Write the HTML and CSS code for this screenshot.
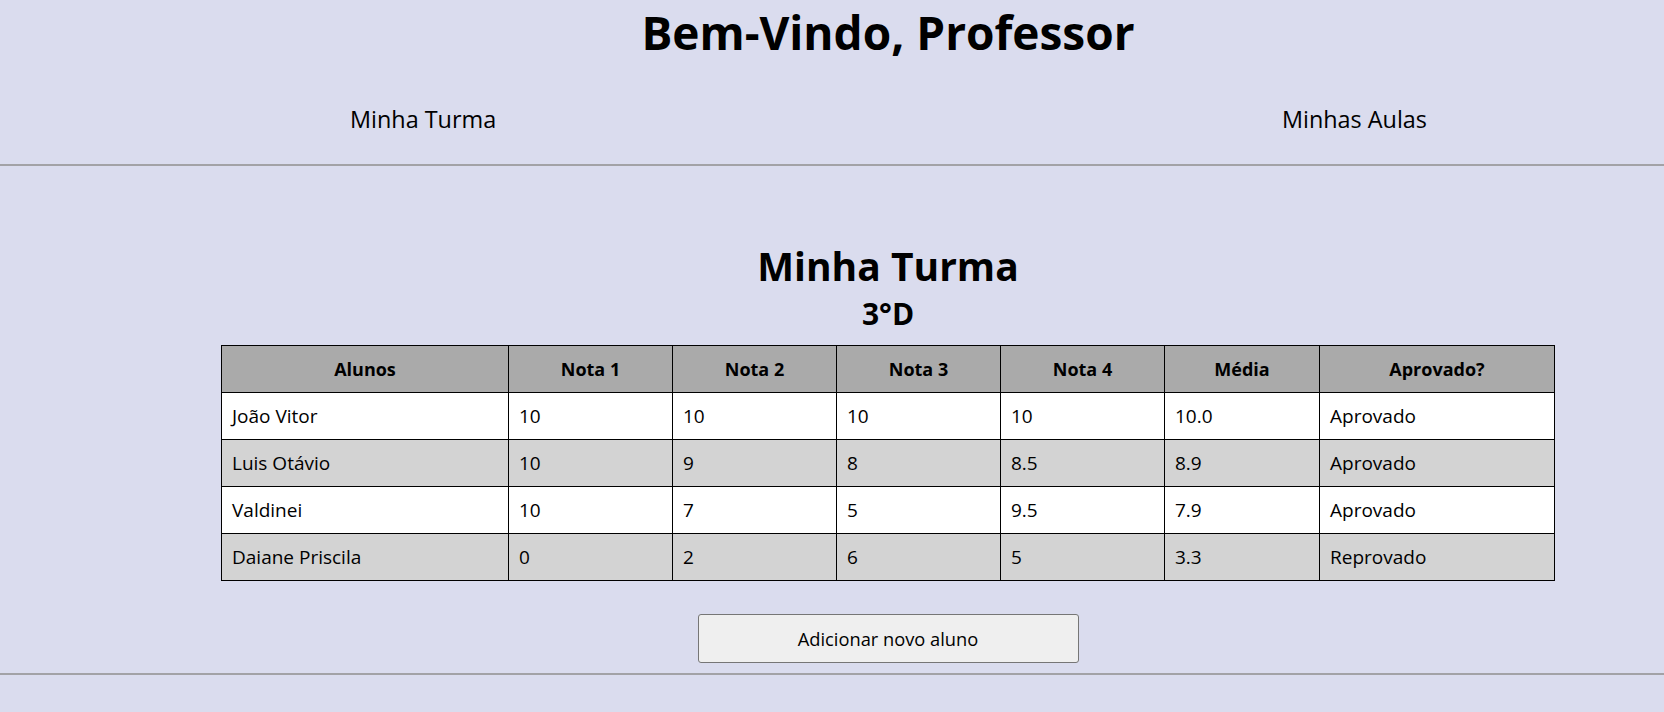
FILE: index.html
```html
<!DOCTYPE html>
<html lang="pt-BR">
<head>
<meta charset="utf-8">
<title>Professor</title>
<link rel="stylesheet" href="styles.css">
</head>
<body>
<header class="top">
  <h1 class="title">Bem-Vindo, Professor</h1>
  <nav class="nav">
    <a class="nav-link" href="#">Minha Turma</a>
    <a class="nav-link" href="#">Minhas Aulas</a>
  </nav>
</header>
<div class="rule rule-top"></div>
<main class="content">
  <h2 class="section-title">Minha Turma</h2>
  <h3 class="section-sub">3°D</h3>
  <table class="grades">
    <colgroup>
      <col class="c-name"><col class="c-n"><col class="c-n"><col class="c-n"><col class="c-n"><col class="c-avg"><col class="c-ok">
    </colgroup>
    <thead>
      <tr><th>Alunos</th><th>Nota 1</th><th>Nota 2</th><th>Nota 3</th><th>Nota 4</th><th>Média</th><th>Aprovado?</th></tr>
    </thead>
    <tbody>
      <tr><td>João Vitor</td><td>10</td><td>10</td><td>10</td><td>10</td><td>10.0</td><td>Aprovado</td></tr>
      <tr><td>Luis Otávio</td><td>10</td><td>9</td><td>8</td><td>8.5</td><td>8.9</td><td>Aprovado</td></tr>
      <tr><td>Valdinei</td><td>10</td><td>7</td><td>5</td><td>9.5</td><td>7.9</td><td>Aprovado</td></tr>
      <tr><td>Daiane Priscila</td><td>0</td><td>2</td><td>6</td><td>5</td><td>3.3</td><td>Reprovado</td></tr>
    </tbody>
  </table>
  <button class="add-btn" type="button">Adicionar novo aluno</button>
</main>
<div class="rule rule-bottom"></div>
</body>
</html>
```

FILE: styles.css
```css
* { box-sizing: border-box; }

html, body {
  margin: 0;
  padding: 0;
  background: #dadcee;
  color: #000;
  font-family: "Open Sans", "Noto Sans", sans-serif;
  overflow: hidden;
}

.top {
  padding-left: 112px;
}

.title {
  margin: 0;
  font-size: 46px;
  line-height: 64px;
  font-weight: 700;
  text-align: center;
}

.nav {
  display: flex;
  justify-content: space-between;
  margin: 35px 0 0 -112px;
  padding: 0 237px 0 350px;
}

.nav-link {
  font-size: 23.4px;
  line-height: 40px;
  color: #000;
  text-decoration: none;
}

.rule {
  height: 2px;
  background: #a2a2a6;
}

.rule-top { margin-top: 25px; }

.content {
  display: flex;
  flex-direction: column;
  align-items: center;
  padding: 71px 0 0 112px;
}

.section-title {
  margin: 0;
  font-size: 39px;
  line-height: 58px;
  font-weight: 700;
}

.section-sub {
  margin: 0;
  font-size: 30px;
  line-height: 38px;
  font-weight: 700;
}

.grades {
  margin-top: 12px;
  width: 1333px;
  border-collapse: collapse;
  table-layout: fixed;
  font-size: 19px;
}

.c-name { width: 287px; }
.c-n { width: 164px; }
.c-avg { width: 155px; }
.c-ok { width: 235px; }

.grades th,
.grades td {
  border: 1px solid #000;
  padding: 10px 10px;
  line-height: 26px;
}

.grades th {
  background: #aaaaaa;
  font-weight: 700;
  text-align: center;
  font-size: 18px;
}

.grades td {
  text-align: left;
}

.grades tbody tr:nth-child(odd) td { background: #ffffff; }
.grades tbody tr:nth-child(even) td { background: #d3d3d3; }

.add-btn {
  margin-top: 33px;
  width: 381px;
  height: 49px;
  background: #efefef;
  border: 1px solid #767676;
  border-radius: 3px;
  font-family: "Open Sans", "Noto Sans", sans-serif;
  font-size: 18.3px;
  color: #000;
}

.rule-bottom { margin-top: 10px; }
```
